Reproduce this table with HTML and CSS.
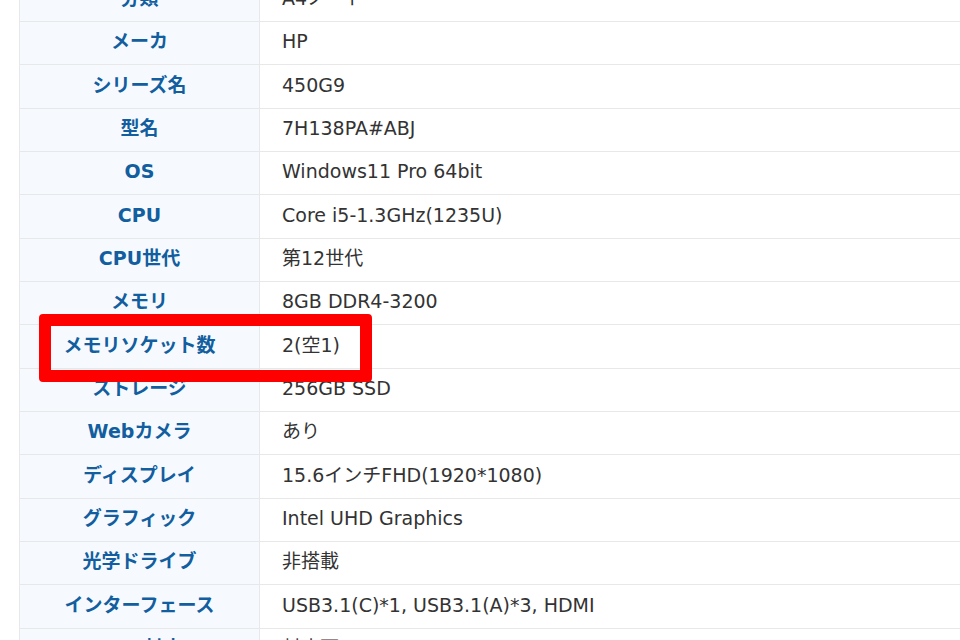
FILE: index.html
```html
<!DOCTYPE html>
<html lang="ja">
<head>
<meta charset="utf-8">
<title>仕様</title>
<link rel="stylesheet" href="styles.css">
</head>
<body>
<div class="page">
  <table class="spec">
    <tbody>
      <tr><th>分類</th><td>A4ノート</td></tr>
      <tr><th>メーカ</th><td>HP</td></tr>
      <tr><th>シリーズ名</th><td>450G9</td></tr>
      <tr><th>型名</th><td>7H138PA#ABJ</td></tr>
      <tr><th>OS</th><td>Windows11 Pro 64bit</td></tr>
      <tr><th>CPU</th><td>Core i5-1.3GHz(1235U)</td></tr>
      <tr><th>CPU世代</th><td>第12世代</td></tr>
      <tr><th>メモリ</th><td>8GB DDR4-3200</td></tr>
      <tr class="marked"><th><span class="highlight"></span>メモリソケット数</th><td>2(空1)</td></tr>
      <tr><th>ストレージ</th><td>256GB SSD</td></tr>
      <tr><th>Webカメラ</th><td>あり</td></tr>
      <tr><th>ディスプレイ</th><td>15.6インチFHD(1920*1080)</td></tr>
      <tr><th>グラフィック</th><td>Intel UHD Graphics</td></tr>
      <tr><th>光学ドライブ</th><td>非搭載</td></tr>
      <tr><th>インターフェース</th><td>USB3.1(C)*1, USB3.1(A)*3, HDMI</td></tr>
      <tr><th>WiFi対応</th><td>対応可</td></tr>
    </tbody>
  </table>
</div>
</body>
</html>
```
FILE: styles.css
```css
html, body {
  margin: 0;
  padding: 0;
  background: #ffffff;
  overflow: hidden;
}
.page {
  width: 960px;
  height: 640px;
  overflow: hidden;
  padding-left: 19px;
  box-sizing: border-box;
}
.spec {
  margin-top: -22.3px;
  width: 1000px;
  border-collapse: collapse;
  font-family: "DejaVu Sans", "Noto Sans CJK JP", sans-serif;
  font-size: 19px;
  table-layout: fixed;
}
.spec tr {
  height: 43.33px;
}
.spec th,
.spec td {
  border: 1px solid #e8e8e8;
  padding: 0 0 3px 0;
  line-height: 1.2;
  vertical-align: middle;
}
.spec th {
  width: 239px;
  background: #f6faff;
  color: #125e9e;
  font-weight: 700;
  text-align: center;
}
.spec td {
  color: #333333;
  padding-left: 22px;
  text-align: left;
  font-weight: 400;
}
.marked th {
  position: relative;
}
.highlight {
  position: absolute;
  left: 19px;
  top: -11px;
  width: 333px;
  height: 68px;
  box-sizing: border-box;
  border: 12px solid #ff0000;
  border-radius: 4px;
  z-index: 2;
  pointer-events: none;
}
```
